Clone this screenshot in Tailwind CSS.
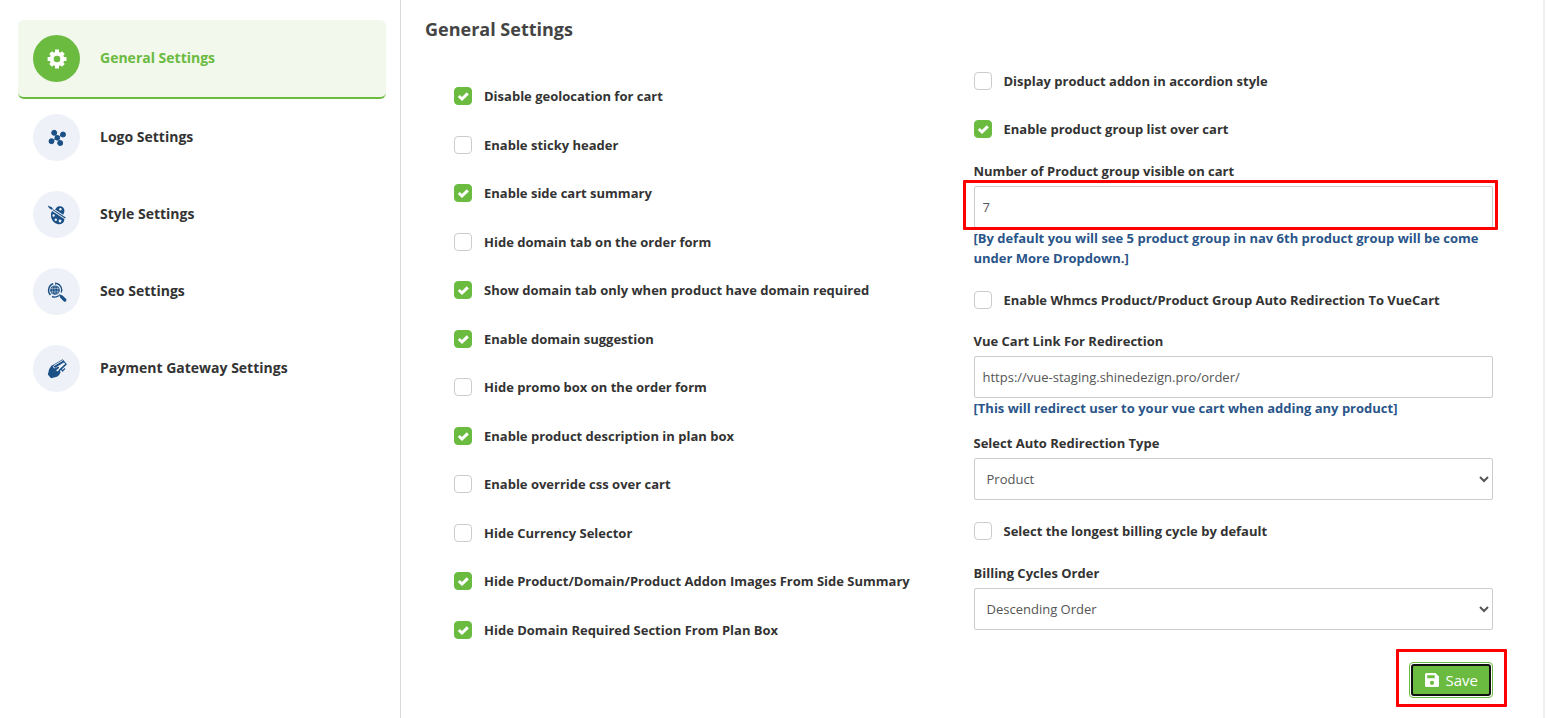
<!DOCTYPE html>
<html lang="en">
<head>
    <meta charset="UTF-8">
    <meta name="viewport" content="width=device-width, initial-scale=1.0">
    <title>General Settings</title>
    <script src="https://cdn.jsdelivr.net/npm/@tailwindcss/browser@4"></script>
</head>
<body class="bg-white font-['Open_Sans',sans-serif] text-[13px] leading-5 text-[#333]">
    <div class="flex min-h-screen mr-px border-r-2 border-[#f0f0f0]">

        <!-- Sidebar -->
        <nav class="w-[401px] shrink-0 border-r border-[#d9d9d9] pt-5 pl-[18px] pr-[14px] text-sm font-bold">
            <a href="#general" class="flex items-center gap-5 p-[15px] rounded-md border-b-2 border-[#6abb40] bg-[#f2f8eb] text-[#6abb40]">
                <span class="flex items-center justify-center size-[47px] rounded-full bg-[#6abb40]">
                    <svg class="size-5" viewBox="0 0 20 20" fill="none" stroke="#fff">
                        <circle cx="10" cy="10" r="5.300" stroke-width="4"/>
                        <path d="M10 .6v3M10 16.400v3M.6 10h3M16.400 10h3M3.600 3.600l2 2M14.400 14.400l2 2M3.600 16.400l2-2M14.400 5.600l2-2" stroke-width="4"/>
                    </svg>
                </span>
                <span class="pb-0.5">General Settings</span>
            </a>
            <a href="#logo" class="flex items-center gap-5 p-[15px]">
                <span class="flex items-center justify-center size-[47px] rounded-full bg-[#eef2f8]">
                    <svg class="size-5" viewBox="0 0 20 20" fill="#1a5086" stroke="#1a5086">
                        <path d="M7 4.500l3.200 5.200 3 4.800M4.500 13l5.700-3.300 5.600-3.300" fill="none" stroke-width="1"/>
                        <circle cx="7.200" cy="4.800" r="2.500"/>
                        <circle cx="16" cy="6.500" r="2.500"/>
                        <circle cx="10.300" cy="9.800" r="2.400"/>
                        <circle cx="4.500" cy="13.200" r="2.500"/>
                        <circle cx="13.200" cy="15" r="2.500"/>
                    </svg>
                </span>
                <span class="pb-0.5">Logo Settings</span>
            </a>
            <a href="#style" class="flex items-center gap-5 p-[15px]">
                <span class="flex items-center justify-center size-[47px] rounded-full bg-[#eef2f8]">
                    <svg class="size-5" viewBox="0 0 20 20">
                        <path d="M11 1.500C15 .3 17.800 3 17.400 6.300c-.3 2.200-1.700 3-1 5 .9 1.800 1.100 2.600.8 4.200-.7 3.300-4.200 4.700-7.400 3.300C6 17.200 3.600 13.500 4 9c.2-2.600 2-4.200 3.700-4.500C9 4.200 9 2.200 11 1.500z" fill="#1a5086"/>
                        <g fill="#eef2f8">
                            <circle cx="13.400" cy="4.300" r="1.200"/>
                            <circle cx="6.600" cy="10.500" r="1.200"/>
                            <circle cx="8.800" cy="14.800" r="1.200"/>
                            <circle cx="13" cy="16" r="1.400"/>
                        </g>
                        <path d="M3.500 3.300L18.500 13" stroke="#eef2f8" stroke-width="2.800"/>
                        <path d="M1 .5c.2 2 1.600 3.600 4 4.200l.8-1.300C4.600 1.500 2.800 1.800 1 .5zM6 4.200l12.800 8.400-.8 1L5.500 5z" fill="#1a5086"/>
                    </svg>
                </span>
                <span class="pb-0.5">Style Settings</span>
            </a>
            <a href="#seo" class="flex items-center gap-5 p-[15px]">
                <span class="flex items-center justify-center size-[47px] rounded-full bg-[#eef2f8]">
                    <svg class="size-5" viewBox="0 0 20 20" fill="none" stroke="#1a5086">
                        <path d="M9.500 1.200A7 7 0 0 1 14.200 10.500M12 13.500A7 7 0 0 1 5 14.500M3.500 13A7 7 0 0 1 6.200 1.600" stroke-width="1.400"/>
                        <path d="M8 .2l2.500 1.200L8.300 3z" fill="#1a5086" stroke="none"/>
                        <circle cx="8" cy="8.200" r="4.800" fill="#1a5086" stroke="none"/>
                        <path d="M3.500 6.500h9M3.500 9.900h9M8 3.400v9.600M6.300 3.600c-1.400 3-1.400 6 0 9.200M9.700 3.600c1.400 3 1.400 6 0 9.200" stroke="#eef2f8" stroke-width=".4"/>
                        <path d="M12.300 12.500l2 2" stroke-width="1.400"/>
                        <path d="M14.400 14.600l3.400 3.400" stroke-width="3.200" stroke-linecap="round"/>
                    </svg>
                </span>
                <span class="pb-0.5">Seo Settings</span>
            </a>
            <a href="#payment" class="flex items-center gap-5 p-[15px]">
                <span class="flex items-center justify-center size-[47px] rounded-full bg-[#eef2f8]">
                    <svg class="size-5" viewBox="0 0 20 20">
                        <path d="M4.500 7.500L15.500 1l3.700 4.200-8.700 8.300z" fill="#eef2f8" stroke="#1a5086" stroke-width="1.100"/>
                        <path d="M6.500 7.300l9.700-5.700 1.300 1.500-9.500 6z" fill="#1a5086"/>
                        <path d="M7 6.500l8.800-5.200" stroke="#eef2f8" stroke-width=".8"/>
                        <path d="M12 11.500l6.500-6M14 9.500l1.500 2.500 2.500-2.500" fill="none" stroke="#1a5086" stroke-width="1.100"/>
                        <path d="M5.500 6.200C3 8 1.700 10 1.500 13L.8 15.500 4 19.300l3-.8c3-.2 5-1.700 6.500-5l-.5-2.300-2 1.500-3-.6 3.800-2.800c1-1-.2-2-1.300-1.300L6 10.200z" fill="#1a5086"/>
                    </svg>
                </span>
                <span class="pb-0.5">Payment Gateway Settings</span>
            </a>
        </nav>

        <!-- Settings form -->
        <form class="flex-1 pt-4 pl-6 pr-[50px]">
            <h1 class="text-lg leading-[27px] font-bold text-[#444]">General Settings</h1>

            <div class="grid grid-cols-2 mt-7 pl-[29px] font-bold">
                <div id="cartOptions" class="flex flex-col justify-between pt-[15px]"></div>

                <div class="pb-[10px]">
                    <label class="flex items-center gap-3">
                        <input type="checkbox" class="appearance-none size-[18px] rounded-[4px] border border-[#ccc] bg-white">
                        Display product addon in accordion style
                    </label>
                    <label class="relative flex items-center gap-3 mt-7">
                        <input type="checkbox" checked class="peer appearance-none size-[18px] rounded-[4px] border border-[#ccc] bg-white checked:border-[#6abb40] checked:bg-[#6abb40]">
                        <svg class="absolute left-0 size-[18px] hidden peer-checked:block" viewBox="0 0 18 18" fill="none" stroke="#fff" stroke-width="3"><path d="M4.800 9l3.200 3 5.800-5.600"/></svg>
                        Enable product group list over cart
                    </label>

                    <label for="groupCount" class="block mt-[22px] mb-[5px]">Number of Product group visible on cart</label>
                    <div class="relative">
                        <input id="groupCount" type="text" value="7" class="block w-full h-[42px] px-2 rounded-[2px] border border-[#ccc] font-normal text-[#555]">
                        <span class="absolute -top-[6px] -bottom-[2px] -left-[11px] -right-[5px] rounded-[1px] border-3 border-[#f00] pointer-events-none"></span>
                    </div>
                    <p class="text-[#2a5589]">[By default you will see 5 product group in nav 6th product group will be come under More Dropdown.]</p>

                    <label class="flex items-center gap-3 mt-[22px]">
                        <input type="checkbox" class="appearance-none size-[18px] rounded-[4px] border border-[#ccc] bg-white">
                        Enable Whmcs Product/Product Group Auto Redirection To VueCart
                    </label>

                    <label for="cartLink" class="block mt-[21px] mb-[5px]">Vue Cart Link For Redirection</label>
                    <input id="cartLink" type="text" value="https://vue-staging.shinedezign.pro/order/" class="block w-full h-[42px] px-2 rounded-[2px] border border-[#ccc] font-normal text-[#555]">
                    <p class="text-[#2a5589]">[This will redirect user to your vue cart when adding any product]</p>

                    <label for="redirectType" class="block mt-[15px] mb-[5px]">Select Auto Redirection Type</label>
                    <select id="redirectType" class="block w-full h-[42px] px-2 rounded-[2px] border border-[#ccc] bg-white font-normal text-[#555]">
                        <option>Product</option>
                        <option>Product Group</option>
                    </select>

                    <label class="flex items-center gap-3 mt-[21px]">
                        <input type="checkbox" class="appearance-none size-[18px] rounded-[4px] border border-[#ccc] bg-white">
                        Select the longest billing cycle by default
                    </label>

                    <label for="cycleOrder" class="block mt-[22px] mb-[5px]">Billing Cycles Order</label>
                    <select id="cycleOrder" class="block w-full h-[42px] px-2 rounded-[2px] border border-[#ccc] bg-white font-normal text-[#555]">
                        <option>Descending Order</option>
                        <option>Ascending Order</option>
                    </select>
                </div>
            </div>

            <div class="flex justify-end mt-[22px]">
                <div class="relative">
                    <button type="submit" class="block p-px rounded-[4px] border border-[#6abb40] bg-white text-[15px] leading-7 text-white">
                        <span class="flex items-center gap-[6px] px-[11px] rounded-[3px] border-2 border-[#101010] bg-[#6abb40]">
                            <svg class="size-4" viewBox="0 0 16 16"><path fill="#fff" fill-rule="evenodd" d="M2.500 1h9L15 4.500v9a1.500 1.500 0 0 1-1.500 1.500h-11A1.500 1.500 0 0 1 1 13.500v-11A1.500 1.500 0 0 1 2.500 1zM3.200 3.300v3h7.500v-3zM8 8.700a2.100 2.100 0 1 0 0 4.200 2.100 2.100 0 0 0 0-4.200z"/></svg>
                            Save
                        </span>
                    </button>
                    <span class="absolute -top-[13px] -bottom-[9px] -left-[13px] -right-[14px] rounded-[1px] border-3 border-[#f00] pointer-events-none"></span>
                </div>
            </div>
        </form>
    </div>

    <script>
        const cartOptions = [
            ["Disable geolocation for cart", true],
            ["Enable sticky header", false],
            ["Enable side cart summary", true],
            ["Hide domain tab on the order form", false],
            ["Show domain tab only when product have domain required", true],
            ["Enable domain suggestion", true],
            ["Hide promo box on the order form", false],
            ["Enable product description in plan box", true],
            ["Enable override css over cart", false],
            ["Hide Currency Selector", false],
            ["Hide Product/Domain/Product Addon Images From Side Summary", true],
            ["Hide Domain Required Section From Plan Box", true],
        ];

        document.getElementById("cartOptions").innerHTML = cartOptions.map(([text, checked]) => `
            <label class="relative flex items-center gap-3">
                <input type="checkbox" ${checked ? "checked" : ""} class="peer appearance-none size-[18px] rounded-[4px] border border-[#ccc] bg-white checked:border-[#6abb40] checked:bg-[#6abb40]">
                <svg class="absolute left-0 size-[18px] hidden peer-checked:block" viewBox="0 0 18 18" fill="none" stroke="#fff" stroke-width="3"><path d="M4.800 9l3.200 3 5.800-5.600"/></svg>
                ${text}
            </label>
        `).join("");
    </script>
</body>
</html>
